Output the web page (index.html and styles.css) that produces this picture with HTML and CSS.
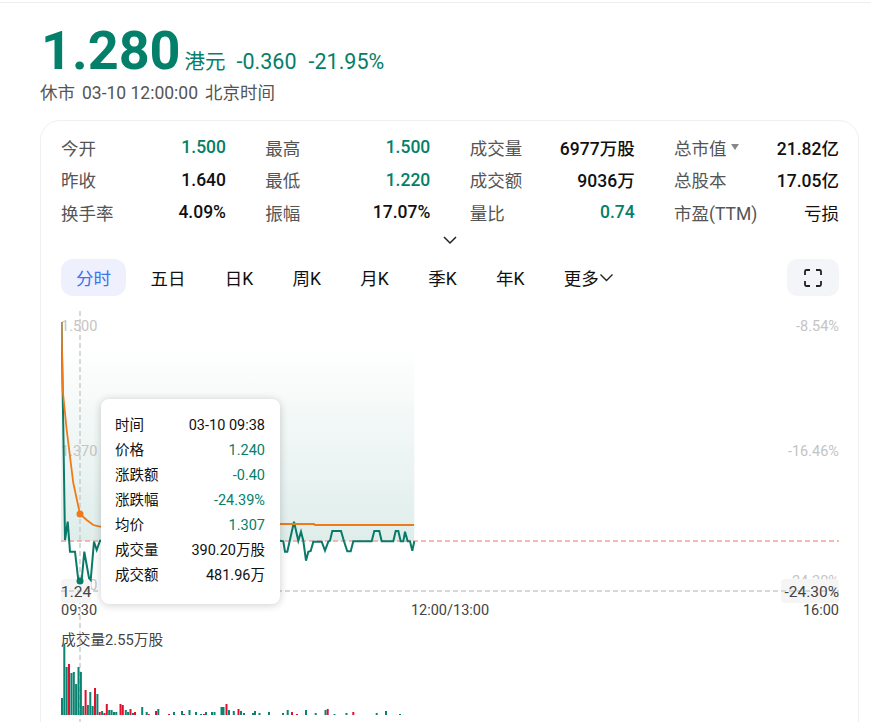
FILE: index.html
```html
<!DOCTYPE html>
<html lang="zh-CN">
<head>
  <meta charset="UTF-8" />
  <title>1.280 港元</title>
  <link rel="stylesheet" href="styles.css">
</head>
<body>
  <div class="page">
    <div class="quote">
      <div class="quote-main">
        <span class="price">1.280</span>
        <span class="unit">港元</span>
        <span class="change">-0.360</span>
        <span class="change">-21.95%</span>
      </div>
      <div class="quote-status">
        <span>休市</span>
        <span>03-10 12:00:00</span>
        <span>北京时间</span>
      </div>
    </div>

    <div class="card">
      <div class="stats">
        <div class="stat"><span class="stat-label">今开</span><span class="stat-value down">1.500</span></div>
        <div class="stat"><span class="stat-label">最高</span><span class="stat-value down">1.500</span></div>
        <div class="stat"><span class="stat-label">成交量</span><span class="stat-value">6977万股</span></div>
        <div class="stat"><span class="stat-label">总市值<i class="caret"></i></span><span class="stat-value">21.82亿</span></div>

        <div class="stat"><span class="stat-label">昨收</span><span class="stat-value">1.640</span></div>
        <div class="stat"><span class="stat-label">最低</span><span class="stat-value down">1.220</span></div>
        <div class="stat"><span class="stat-label">成交额</span><span class="stat-value">9036万</span></div>
        <div class="stat"><span class="stat-label">总股本</span><span class="stat-value">17.05亿</span></div>

        <div class="stat"><span class="stat-label">换手率</span><span class="stat-value">4.09%</span></div>
        <div class="stat"><span class="stat-label">振幅</span><span class="stat-value">17.07%</span></div>
        <div class="stat"><span class="stat-label">量比</span><span class="stat-value down">0.74</span></div>
        <div class="stat"><span class="stat-label">市盈(TTM)</span><span class="stat-value plain">亏损</span></div>
      </div>

      <div class="expand">
        <svg width="16" height="10" viewBox="0 0 16 10"><path d="M2 2l6 6 6-6" fill="none" stroke="#222" stroke-width="1.5"/></svg>
      </div>

      <div class="tabs">
        <span class="tab active">分时</span>
        <span class="tab">五日</span>
        <span class="tab">日K</span>
        <span class="tab">周K</span>
        <span class="tab">月K</span>
        <span class="tab">季K</span>
        <span class="tab">年K</span>
        <span class="tab more">更多<svg width="15" height="9" viewBox="0 0 15 9"><path d="M1.500 1.500l6 6 6-6" fill="none" stroke="#222" stroke-width="1.400"/></svg></span>
        <span class="fullscreen">
          <svg width="20" height="20" viewBox="0 0 20 20"><path d="M2 7V3.500A1.500 1.500 0 0 1 3.500 2H7M13 2h3.500A1.500 1.500 0 0 1 18 3.500V7M18 13v3.500a1.500 1.500 0 0 1-1.500 1.500H13M7 18H3.500A1.500 1.500 0 0 1 2 16.500V13" fill="none" stroke="#222" stroke-width="1.800"/></svg>
        </span>
      </div>

      <div class="chart">
        <svg class="chart-svg" width="779" height="412" viewBox="61 310 779 412">
          <defs>
            <linearGradient id="areaFill" gradientUnits="userSpaceOnUse" x1="0" y1="345" x2="0" y2="545">
              <stop offset="0" stop-color="#ffffff"/>
              <stop offset="1" stop-color="#deedea"/>
            </linearGradient>
          </defs>

          <!-- area above the price line -->
          <polygon fill="url(#areaFill)" points="61,345 414.300,345 414.300,541.300 61,541.300"/>

          <!-- labels under the lines -->
          <text class="axis" x="61" y="331">1.500</text>
          <text class="axis" x="61" y="456">1.370</text>
          <text class="axis" x="61" y="590">1.240</text>
          <text class="axis end" x="839" y="331">-8.54%</text>
          <text class="axis end" x="839" y="456">-16.46%</text>
          <text class="axis end" x="839" y="586">-24.30%</text>

          <line class="prev-close" x1="61" y1="541" x2="839" y2="541"/>
          <line class="cross" x1="80" y1="311" x2="80" y2="722"/>

          <rect class="axis-chip" x="61" y="579" width="30" height="24" rx="4"/>
          <rect class="axis-chip" x="781" y="579" width="58" height="24" rx="4"/>
          <line class="cross" x1="61" y1="591" x2="839" y2="591"/>
          <text class="axis-dark chip-text" x="61" y="597">1.24</text>
          <text class="axis-dark chip-text end" x="839" y="597">-24.30%</text>

          <text class="axis-dark" x="61" y="615">09:30</text>
          <text class="axis-dark middle" x="450" y="615">12:00/13:00</text>
          <text class="axis-dark end" x="839" y="615">16:00</text>

          <polyline class="line-price" points="61.500,322 63.300,428 65,540 67.700,521.700 70,551.700 75,551.700 78.300,580 81.700,580 84.300,551.700 89,578 90.700,580 94,541.700 96.700,550 100,540.700 280,540.700 283.300,541.300 285,551.700 287.300,551.700 294,521.700 298.300,540.700 301,531.700 303.300,540.700 306,560.700 308.300,551.700 310.700,551 313.300,541.700 321.700,541.700 325,550.700 328.300,541.700 330,540.700 332.300,531 341,531 344,541.300 347.300,551.300 350.700,551.300 353.300,541.300 371.700,541.300 374.300,531 379.300,531 381.700,541.300 393.300,541.300 395.700,531 398.300,531 400.700,541.300 403.300,541.300 405,531.700 407.700,541.300 410,541.300 412.300,550.700 414.300,541.300"/>
          <polyline class="line-avg" points="61.500,322 62.700,390 66.700,430 73.300,483 80,514 86.700,520 93.300,525 100,526.700 280,524 314,524 315,525 414,525"/>
          <circle cx="80" cy="514" r="3.500" fill="#ee7a1a"/>
          <circle cx="80" cy="581" r="3.500" fill="#0a7a68"/>

          <text class="axis-dark vol-title" x="61" y="645">成交量2.55万股</text>

          <path class="bars-down" d="M62 715V698M64.300 715V644M66.700 715V667M71.400 715V673M73.800 715V672M76.100 715V684M78.500 715V667M80.900 715V672M83.200 715V706M87.900 715V705M90.300 715V692M92.700 715V706M97.400 715V694M102.100 715V711M109.200 715V710M111.600 715V710M114 715V712M116.300 715V712M125.800 715V710M128.100 715V712M133 715V713M142.200 715V707M146.700 715V712M158.300 715V709M174 715V712M182 715V711M189.500 715V710M196 715V712M201 715V714M206 715V712M212 715V712M214.500 715V712M221.500 715V707M223.500 715V707M229 715V710M233.800 715V711M241 715V711M244 715V713M253 715V713M255 715V711M259.500 715V713M269 715V712M283 715V713M287.700 715V710M306 715V710M315.700 715V713M325.500 715V710M334.500 715V714M346.500 715V713M376.700 715V713M386 715V711M400 715V714"/>
          <path class="bars-up" d="M69 715V664M85.600 715V690M95 715V688M99.700 715V712M104.400 715V713M106.800 715V704M120.500 715V704M122.800 715V705M130.500 715V709M135 715V712M148.700 715V714M156 715V711M169 715V714M184 715V714M204 715V714M226.500 715V704M238.500 715V709M292 715V712M297 715V714M327.700 715V709M353.300 715V712"/>
        </svg>

        <div class="tip">
          <div class="tip-row"><span>时间</span><span>03-10 09:38</span></div>
          <div class="tip-row"><span>价格</span><span class="down">1.240</span></div>
          <div class="tip-row"><span>涨跌额</span><span class="down">-0.40</span></div>
          <div class="tip-row"><span>涨跌幅</span><span class="down">-24.39%</span></div>
          <div class="tip-row"><span>均价</span><span class="down">1.307</span></div>
          <div class="tip-row"><span>成交量</span><span>390.20万股</span></div>
          <div class="tip-row"><span>成交额</span><span>481.96万</span></div>
        </div>
      </div>
    </div>
  </div>
</body>
</html>
```

FILE: styles.css
```css
html, body {
  margin: 0;
  padding: 0;
  background: #fff;
}

body {
  font-family: Roboto, "Noto Sans CJK SC", sans-serif;
  color: #111;
}

.page {
  box-sizing: border-box;
  height: 720px;
  overflow: hidden;
  border-top: 1px solid #eeeeee;
  margin-top: 2px;
  padding: 0 12px 0 40px;
}

/* quote header */
.quote-main {
  display: flex;
  align-items: baseline;
  height: 77px;
  color: #04806a;
}

.price {
  font-size: 54px;
  font-weight: 700;
  line-height: 96px;
  margin-left: 1px;
  margin-right: 4px;
}

.unit {
  font-size: 20.500px;
  margin-right: 11px;
}

.change {
  font-size: 21.500px;
  margin-right: 12px;
}

.quote-status {
  display: flex;
  gap: 7px;
  height: 40px;
  font-size: 17.500px;
  line-height: 26px;
  color: #555;
}

/* main card */
.card {
  border: 1px solid #f0f0f0;
  border-radius: 20px;
  padding: 10px 19px 0 20px;
  height: 700px;
}

.stats {
  display: grid;
  grid-template-columns: repeat(4, 165px);
  justify-content: space-between;
}

.stat {
  display: flex;
  justify-content: space-between;
  align-items: center;
  height: 32.500px;
  font-size: 17.500px;
}

.stat-label {
  color: #555;
  display: flex;
  align-items: center;
}

.stat-value {
  font-weight: 500;
  color: #111;
}

.stat-value.plain {
  font-weight: 400;
}

.down {
  color: #04806a;
}

.caret {
  width: 0;
  height: 0;
  margin-left: 5px;
  border: 4px solid transparent;
  border-top: 6px solid #888;
  border-bottom: 0;
}

.expand {
  display: flex;
  justify-content: center;
  height: 14px;
  padding-top: 6px;
}

/* period tabs */
.tabs {
  display: flex;
  align-items: center;
  margin-top: 10.500px;
  height: 37px;
  font-size: 17.500px;
}

.tab {
  display: flex;
  align-items: center;
  justify-content: center;
  height: 37px;
  margin-right: 39.300px;
}

.tab.active {
  width: 65px;
  background: #eef1fd;
  border-radius: 12px;
  color: #3f73f0;
  margin-right: 24.500px;
}

.tab.more {
  margin-right: 0;
}

.fullscreen {
  display: flex;
  align-items: center;
  justify-content: center;
  width: 52px;
  height: 37px;
  margin-left: auto;
  background: #f4f5f9;
  border-radius: 10px;
}

/* chart */
.chart {
  position: relative;
  margin-top: 14px;
}

.chart-svg {
  display: block;
  font-size: 14.500px;
}

.axis {
  fill: #c4c4c4;
}

.axis-dark {
  fill: #444;
}

.chip-text {
  font-size: 15.500px;
}

.vol-title {
  font-size: 14.700px;
}

.end {
  text-anchor: end;
}

.middle {
  text-anchor: middle;
}

.axis-chip {
  fill: #f5f5f5;
}

.prev-close {
  stroke: #f2a29a;
  stroke-width: 1.500;
  stroke-dasharray: 5 3;
}

.cross {
  stroke: #cccccc;
  stroke-width: 1.500;
  stroke-dasharray: 5 3;
}

.line-price {
  fill: none;
  stroke: #0a7a68;
  stroke-width: 2;
}

.line-avg {
  fill: none;
  stroke: #ee7a1a;
  stroke-width: 1.800;
}

.bars-down {
  fill: none;
  stroke: #0a8370;
  stroke-width: 2;
}

.bars-up {
  fill: none;
  stroke: #e0102f;
  stroke-width: 2;
}

/* tooltip */
.tip {
  position: absolute;
  left: 40px;
  top: 89px;
  box-sizing: border-box;
  width: 179px;
  height: 205px;
  padding: 14px 15px 14px 14px;
  background: #fff;
  border-radius: 8px;
  box-shadow: 0 1px 8px rgba(0, 0, 0, 0.2);
  font-size: 14.500px;
}

.tip-row {
  display: flex;
  justify-content: space-between;
  height: 25px;
  line-height: 25px;
}
```
